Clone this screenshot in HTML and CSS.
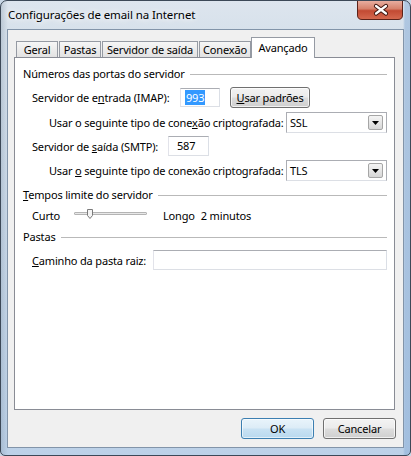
FILE: index.html
```html
<!DOCTYPE html>
<html lang="pt">
<head>
<meta charset="utf-8">
<title>Configurações de email na Internet</title>
<link rel="stylesheet" href="styles.css">
</head>
<body>
<div class="window">
  <div class="titlebar"><span class="title">Configurações de email na Internet</span></div>
  <div class="close">
    <svg width="46" height="20" viewBox="0 0 46 20">
      <defs>
        <linearGradient id="cg" x1="0" y1="0" x2="0" y2="1">
          <stop offset="0" stop-color="#eab3a6"/>
          <stop offset="0.45" stop-color="#d6826c"/>
          <stop offset="0.55" stop-color="#c24a33"/>
          <stop offset="1" stop-color="#d66a50"/>
        </linearGradient>
      </defs>
      <path d="M0.5 0 V15 Q0.5 19.5 5 19.5 H41 Q45.5 19.5 45.5 15 V0" fill="url(#cg)" stroke="#5b2219"/>
      <path d="M19 6 L29 13.5 M29 6 L19 13.5" stroke="#3f1610" stroke-width="4.2" stroke-linecap="round"/>
      <path d="M19 6 L29 13.5 M29 6 L19 13.5" stroke="#ffffff" stroke-width="2.2" stroke-linecap="round"/>
    </svg>
  </div>
  <div class="client">
    <div class="tabs">
      <div class="tab t-geral">Geral</div>
      <div class="tab t-pastas">Pastas</div>
      <div class="tab t-saida">Servidor de saída</div>
      <div class="tab t-conexao">Conexão</div>
      <div class="tab active t-avancado">Avançado</div>
    </div>
    <div class="panel">
      <div class="group g1"><span>Números das portas do servidor</span><i class="rule"></i></div>

      <div class="row r1">
        <span class="lbl l-imap">Servidor de e<u>n</u>trada (IMAP):</span>
        <div class="field f-imap"><span class="sel">993</span></div>
        <div class="btn b-usar"><u>U</u>sar padrões</div>
      </div>

      <div class="row r2">
        <span class="lbl l-cripto">Usar o seguinte tipo de cone<u>x</u>ão criptografada:</span>
        <div class="combo"><span class="combo-text">SSL</span><span class="drop"><svg width="7" height="4" viewBox="0 0 7 4"><path d="M0 0 H7 L3.5 4 Z" fill="#000"/></svg></span></div>
      </div>

      <div class="row r3">
        <span class="lbl l-smtp">Servidor de <u>s</u>aída (SMTP):</span>
        <div class="field f-smtp">587</div>
      </div>

      <div class="row r4">
        <span class="lbl l-cripto">Usar <u>o</u> seguinte tipo de conexão criptografada:</span>
        <div class="combo"><span class="combo-text">TLS</span><span class="drop"><svg width="7" height="4" viewBox="0 0 7 4"><path d="M0 0 H7 L3.5 4 Z" fill="#000"/></svg></span></div>
      </div>

      <div class="group g2"><span><u>T</u>empos limite do servidor</span><i class="rule"></i></div>

      <div class="row r5">
        <span class="lbl l-curto">Curto</span>
        <div class="track">
          <svg class="thumb" width="6" height="10" viewBox="0 0 6 10"><path d="M0.5 0.5 H5.5 V6.5 L3 9.5 L0.5 6.5 Z" fill="#f4f4f4" stroke="#7a7a7a"/></svg>
        </div>
        <span class="lbl l-longo">Longo</span>
        <span class="lbl l-min">2 minutos</span>
      </div>

      <div class="group g3"><span>Pastas</span><i class="rule"></i></div>

      <div class="row r6">
        <span class="lbl l-caminho"><u>C</u>aminho da pasta raiz:</span>
        <div class="field f-caminho"></div>
      </div>
    </div>
    <div class="actions">
      <div class="btn b-ok">OK</div>
      <div class="btn">Cancelar</div>
    </div>
  </div>
</div>
</body>
</html>
```

FILE: styles.css
```css
html, body {
  margin: 0;
  padding: 0;
  background: #c9d7e6;
}
body {
  font-family: "Noto Sans", "Open Sans", sans-serif;
  font-size: 11px;
  letter-spacing: -0.17px;
  color: #000;
}
u {
  text-decoration: underline;
  text-underline-offset: 1px;
}
.window {
  width: 411px;
  height: 456px;
  box-sizing: border-box;
  position: relative;
  display: flex;
  flex-direction: column;
  border: 1px solid #3c4857;
  border-radius: 7px 7px 5px 5px;
  overflow: hidden;
  background:
    linear-gradient(90deg, rgba(120,140,160,0.3) 0, rgba(255,255,255,0) 7px, rgba(255,255,255,0) 402px, rgba(140,175,215,0.55) 404px),
    linear-gradient(180deg, #dde5ee 0, #d7e1eb 30px, #cddbea 200px, #bcd1e8 100%);
}
.titlebar {
  height: 28px;
  flex: none;
  padding-left: 7px;
  line-height: 28px;
}
.title {
  font-size: 11.5px;
  letter-spacing: -0.1px;
  color: #000;
  text-shadow: 0 0 6px #fff, 0 0 10px #fff;
}
.close {
  position: absolute;
  left: 356px;
  top: -1px;
  width: 46px;
  height: 20px;
}
.close svg { display: block; }

.client {
  flex: 1;
  display: flex;
  flex-direction: column;
  margin: 0 6px 7px 6px;
  border: 1px solid #8294a9;
  background: #f0f0f0;
  padding: 7px 8px 8px 6px;
}
.tabs {
  position: relative;
  z-index: 1;
  height: 21px;
  margin-bottom: -1px;
  display: flex;
  align-items: flex-end;
  padding-left: 2px;
  flex: none;
}
.tab {
  box-sizing: border-box;
  height: 16px;
  margin-bottom: 1px;
  border: 1px solid #959aa3;
  border-bottom: none;
  background: linear-gradient(180deg, #f6f6f6 0%, #ececec 50%, #e2e2e2 100%);
  line-height: 15px;
  text-align: center;
  white-space: nowrap;
}
.tab + .tab { margin-left: 1px; }
.t-geral { width: 42px; }
.t-pastas { width: 42px; }
.t-saida { width: 96px; }
.t-conexao { width: 52px; }
.tab.active {
  width: 64px;
  height: 21px;
  margin-bottom: 0;
  margin-left: 0;
  background: #fff;
  padding-top: 2px;
}

.panel {
  flex: 1;
  display: flex;
  flex-direction: column;
  border: 1px solid #898c95;
  background: #fff;
  padding: 8px 7px 0 8px;
}
.group {
  display: flex;
  align-items: center;
  height: 16px;
  line-height: 16px;
  white-space: nowrap;
}
.rule {
  flex: 1;
  height: 1px;
  margin-left: 5px;
  background: #b9b9b9;
}
.g2 { margin-top: 6px; }
.g3 { margin-top: 4px; }

.row {
  display: flex;
  align-items: center;
  margin-left: 9px;
  white-space: nowrap;
}
.lbl { flex: none; }
.r1 { margin-top: 5px; height: 21px; }
.r2 { margin-top: 4px; height: 21px; margin-left: 26px; }
.r3 { margin-top: 3px; height: 20px; }
.r4 { margin-top: 4px; height: 21px; margin-left: 26px; }
.r5 { margin-top: 2px; height: 20px; }
.r6 { margin-top: 5px; height: 20px; }

.l-imap { width: 148px; }
.l-smtp { width: 136px; }
.l-cripto { width: 237px; }
.l-caminho { width: 121px; }
.l-curto { width: 42px; }
.l-longo { margin-left: 16px; }
.l-min { margin-left: 6px; }

.field {
  box-sizing: border-box;
  height: 20px;
  border: 1px solid #abadb3;
  border-bottom-color: #dcdfe5;
  border-left-color: #e2e3ea;
  border-right-color: #dbdfe6;
  background: #fff;
  line-height: 18px;
  padding-left: 4px;
}
.f-imap { width: 40px; height: 19px; line-height: 17px; }
.f-smtp { width: 41px; padding-left: 8px; }
.f-caminho { width: 234px; }
.sel {
  background: #3399ff;
  color: #fff;
  padding: 0 1px;
}

.btn {
  box-sizing: border-box;
  height: 21px;
  border: 1px solid #707070;
  border-radius: 3px;
  background: linear-gradient(180deg, #f3f3f3 0%, #ebebeb 48%, #dddddd 52%, #cfcfcf 100%);
  box-shadow: inset 0 0 0 1px rgba(255,255,255,0.7);
  text-align: center;
  line-height: 19px;
  width: 73px;
}
.b-usar { width: 80px; margin-left: 10px; }
.b-ok {
  border-color: #3c7fb1;
  background: linear-gradient(180deg, #e9f4fb 0%, #dcecf7 48%, #c9e2f3 52%, #b9d9ef 100%);
  box-shadow: inset 0 0 0 1px rgba(255,255,255,0.6);
}

.combo {
  box-sizing: border-box;
  width: 102px;
  height: 21px;
  display: flex;
  align-items: center;
  justify-content: space-between;
  border: 1px solid #abadb3;
  border-bottom-color: #dcdfe5;
  background: #fff;
  padding: 0 3px 0 3px;
}
.combo-text { line-height: 19px; }
.drop {
  box-sizing: border-box;
  width: 15px;
  height: 15px;
  display: flex;
  align-items: center;
  justify-content: center;
  border: 1px solid #a6a6a6;
  border-radius: 2px;
  background: linear-gradient(180deg, #f4f4f4 0%, #e6e6e6 50%, #d6d6d6 100%);
}
.drop svg { display: block; }

.track {
  position: relative;
  box-sizing: border-box;
  width: 73px;
  height: 3px;
  border: 1px solid #b4b4b4;
  border-radius: 1px;
  background: #e8e8e8;
  margin-top: -3px;
}
.thumb {
  position: absolute;
  left: 12px;
  top: -4px;
  display: block;
}

.actions {
  flex: none;
  display: flex;
  justify-content: flex-end;
  gap: 9px;
  margin-top: 8px;
  margin-right: -1px;
}
```
